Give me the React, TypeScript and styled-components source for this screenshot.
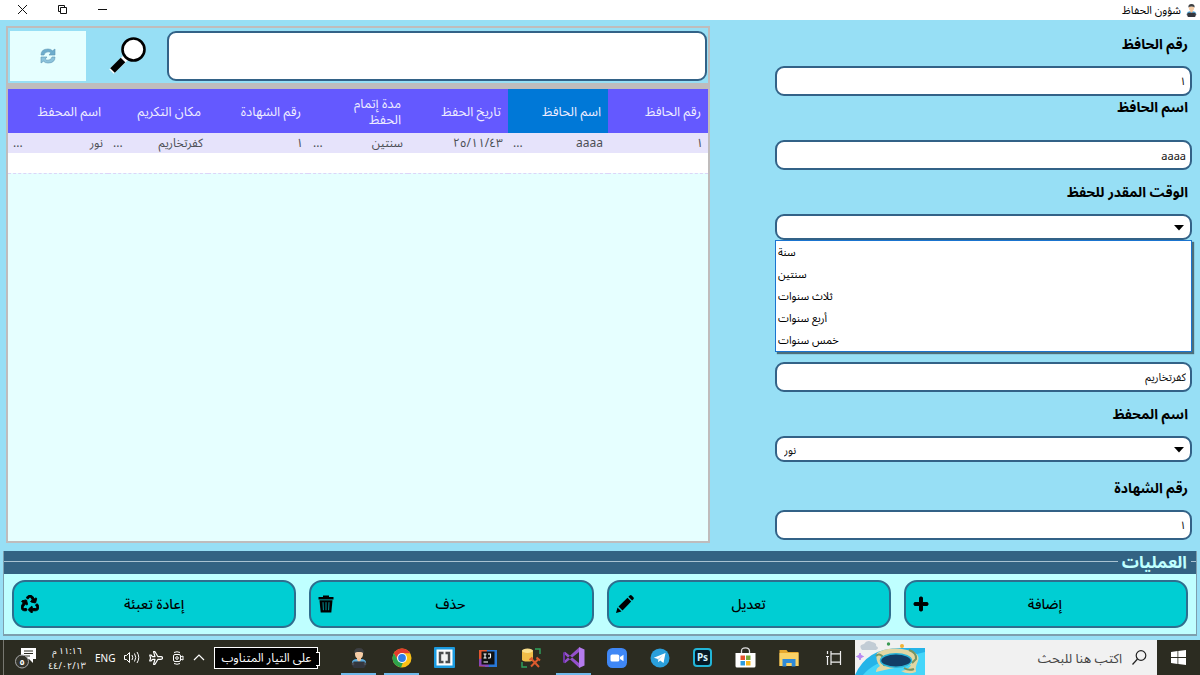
import React from "react";
import styled, { createGlobalStyle } from "styled-components";
import { FaRecycle, FaPlus } from "react-icons/fa";

const GlobalStyle = createGlobalStyle`
  * { box-sizing: border-box; }
  body { margin: 0; background: #97dff5; }
  body, button, input, select {
    font-family: "Noto Sans", "Noto Sans Arabic", "DejaVu Sans", sans-serif;
  }
`;

const Page = styled.div`
  min-height: 100vh;
  display: flex;
  flex-direction: column;
  background: #97dff5;
  color: #000;
`;

/* Title bar */
const TitleBar = styled.header`
  height: 20px;
  display: flex;
  align-items: center;
  gap: 4px;
  padding: 0 2px;
  background: #fff;
`;

const Title = styled.h1`
  margin: 0;
  flex: 1;
  font-size: 11px;
  line-height: 20px;
  font-weight: 400;
`;

const WindowControls = styled.div`
  display: flex;
`;

const WindowButton = styled.button`
  width: 40px;
  height: 20px;
  padding: 0 0 2px;
  border: 0;
  background: none;
  display: grid;
  place-items: center;
`;

/* Main area */
const Main = styled.main`
  flex: 1;
  display: grid;
  grid-template-columns: 417fr 704fr;
  column-gap: 65px;
  padding: 0 8px 8px 6px;
`;

const Form = styled.form`
  padding: 2px 0 3px;
`;

const Field = styled.div<{ $tall?: boolean }>`
  min-height: ${(p) => (p.$tall ? 148 : 74)}px;
`;

const Label = styled.label<{ $top?: boolean }>`
  display: block;
  height: 44px;
  padding: 0 4px;
  font-size: 14px;
  font-weight: 700;
  line-height: ${(p) => (p.$top ? 22 : 44)}px;
`;

const TextInput = styled.input`
  display: block;
  width: 100%;
  height: 30px;
  padding: 0 4px;
  border: 2px solid #336287;
  border-radius: 9px;
  background: #fff;
  color: #111;
  font-size: 11px;
`;

const SelectWrap = styled.div`
  position: relative;
`;

const Select = styled.select`
  display: block;
  appearance: none;
  width: 100%;
  height: 26px;
  padding: 0 7px;
  border: 2px solid #336287;
  border-radius: 9px;
  background: #fff;
  color: #111;
  font-size: 11px;
`;

const Arrow = styled.svg`
  position: absolute;
  right: 8px;
  top: 11px;
  pointer-events: none;
`;

const Menu = styled.ul`
  position: absolute;
  top: 100%;
  left: 0;
  right: 0;
  margin: 0;
  padding: 0;
  list-style: none;
  background: #fff;
  border: 1px solid #1a74cf;
  box-shadow: 2px 2px 1px #4c6f7c;
`;

const MenuItem = styled.li`
  padding: 0 2px;
  font-size: 11px;
  line-height: 22px;
  text-align: left;
`;

/* Records panel */
const Panel = styled.section`
  margin-top: 6px;
  display: flex;
  flex-direction: column;
  border: 2px solid #bfbcbc;
  background: #e6ffff;
`;

const Toolbar = styled.div`
  display: flex;
  align-items: center;
  gap: 20px;
  height: 61px;
  padding: 0 1px 0 2px;
  background: #97dff5;
  border-bottom: 6px solid #bfbcbc;
`;

const SearchInput = styled.input`
  flex: 1;
  min-width: 0;
  height: 50px;
  padding: 0 10px;
  border: 2px solid #336287;
  border-radius: 9px;
  background: #fff;
  font-size: 14px;
`;

const RefreshButton = styled.button`
  width: 76px;
  height: 50px;
  margin-right: 3px;
  border: 0;
  background: #e6ffff;
  display: grid;
  place-items: center;
`;

const Table = styled.table`
  width: 100%;
  table-layout: fixed;
  border-collapse: collapse;
`;

const HeadCell = styled.th<{ $active?: boolean }>`
  height: 44px;
  padding: 0 7px 0 16px;
  background: ${(p) => (p.$active ? "#0078d7" : "#6459ff")};
  color: #eeecff;
  font-size: 13px;
  line-height: 16px;
  font-weight: 400;
  text-align: right;
`;

const Cell = styled.td`
  height: 20px;
  padding: 0 5px;
  background: #e6e3fb;
  color: #4c4f55;
  font-size: 12px;
  line-height: 20px;
`;

const CellContent = styled.div`
  display: flex;
  justify-content: space-between;
`;

const EmptyCell = styled.td`
  height: 20px;
  padding: 0;
  background: #fff;
  border-bottom: 1px dashed #dcd5f8;
`;

/* Operations */
const Operations = styled.section`
  margin: 0 3px 4px;
  border: solid #7d9fae;
  border-width: 0 1px 2px;
  background: #bfffff;
`;

const OperationsHead = styled.div`
  height: 23px;
  display: flex;
  align-items: center;
  gap: 4px;
  padding-bottom: 2px;
  background: #336383;
`;

const Rule = styled.span<{ $short?: boolean }>`
  flex: ${(p) => (p.$short ? "0 0 5px" : "1")};
  height: 1px;
  background: #a9c3d2;
`;

const OperationsTitle = styled.h2`
  margin: 0;
  font-size: 17px;
  line-height: 20px;
  font-weight: 700;
  color: #bfffff;
`;

const ButtonRow = styled.div`
  display: grid;
  grid-template-columns: repeat(4, 1fr);
  gap: 13px;
  padding: 6px 8px;
`;

const ActionButton = styled.button`
  height: 48px;
  display: flex;
  align-items: center;
  padding: 0 7px;
  border: 2px solid #2f6e8e;
  border-radius: 13px;
  background: #00ced3;
  color: #000;
  font-size: 14px;
  font-weight: 500;
`;

const ActionLabel = styled.span`
  flex: 1;
  padding-right: 18px;
  text-align: center;
`;

/* Taskbar */
const Taskbar = styled.footer`
  height: 35px;
  display: flex;
  background: #2c2c21;
  color: #fff;
`;

const TaskButton = styled.button<{ $running?: boolean }>`
  flex: none;
  width: 43px;
  padding: 0;
  border: 0;
  background: linear-gradient(
    to left,
    transparent 4px,
    ${(p) => (p.$running ? "#6fb9ea" : "transparent")} 4px 39px,
    transparent 39px
  ) bottom / 100% 2px no-repeat;
  display: grid;
  place-items: center;
`;

const AppList = styled.div`
  flex: none;
  display: flex;
  margin-right: 2px;
`;

const SearchBox = styled.div`
  flex: none;
  display: flex;
  width: 302px;
  background: #f1f1f1;
`;

const SearchLabel = styled.label`
  flex: 1;
  display: flex;
  align-items: center;
  gap: 10px;
  padding: 0 10px;
`;

const TaskSearch = styled.input`
  flex: 1;
  min-width: 0;
  padding: 0;
  border: 0;
  outline: 0;
  background: none;
  font-size: 13px;
  &::placeholder { color: #444; opacity: 1; }
`;

const Tray = styled.div`
  margin-right: auto;
  display: flex;
  align-items: center;
  gap: 9px;
  padding-left: 3px;
`;

const Battery = styled.div`
  position: relative;
  height: 22px;
  padding: 0 6px;
  border: 1px solid #fff;
  background: #000;
  font-size: 12px;
  line-height: 20px;
  white-space: nowrap;
  &::after {
    content: "";
    position: absolute;
    right: -3px;
    top: 4px;
    width: 3px;
    height: 12px;
    border: 1px solid #fff;
    border-left: 0;
    background: #000;
  }
`;

const Language = styled.span`
  font-size: 10px;
`;

const Clock = styled.time`
  width: 38px;
  font-size: 9px;
  line-height: 15px;
  text-align: center;
  white-space: nowrap;
`;

const DesktopEdge = styled.span`
  width: 1px;
  height: 35px;
  background: #77776f;
`;

const Person = ({ size }: { size: number }) => (
  <svg width={size} height={size} viewBox="0 0 20 20">
    <path d="M3 17v-2.500q0-3 4-3.500h6q4 .500 4 3.500V17z" fill="#5baee0" />
    <path d="M8 9h4v3l-2 2-2-2z" fill="#f4c39a" />
    <path d="M6 4h8v2q0 4.500-4 4.500T6 6z" fill="#f6cda6" />
    <path d="M5.300 5.500Q4.500 0 10 0t4.700 5.500Q13.500 3.800 10 3.800T5.300 5.500z" fill="#3d3f42" />
    <path d="M4.500 13.500h11l1 5-1.500 1.500H5l-1.500-1.500z" fill="#33363d" />
    <circle cx="4" cy="16" r="1.400" fill="#4a4c54" />
    <circle cx="16" cy="16" r="1.400" fill="#4a4c54" />
  </svg>
);

const Pencil = () => (
  <svg width="18" height="18" viewBox="0 0 18 18">
    <path d="M0 18l1.500-5.500 4 4zM2.500 11.500L11.500 2.700l3.700 3.700L6.500 15.500zM12.400 1.800l1.300-1.300q1-.9 2 0l1.700 1.700q.9 1 0 2l-1.300 1.300z" />
  </svg>
);

const Trash = () => (
  <svg width="16" height="18" viewBox="0 0 16 18">
    <path d="M5 2V.500h6V2h4.500v2.500H.500V2z" />
    <path d="M1.500 5.300h13L13.300 17.500H2.700z" />
    <path d="M5 7.200l.4 8M8 7.200v8M11 7.200l-.4 8" stroke="#00a4a8" strokeWidth=".9" />
  </svg>
);

const Magnifier = () => (
  <svg width="38" height="38" viewBox="0 0 38 38">
    <path d="M2.500 34.500L17 20.500" stroke="#fff" strokeWidth="6.500" />
    <path d="M3.500 33.500L14 23" stroke="#000" strokeWidth="6.500" />
    <circle cx="24.500" cy="12.500" r="11" fill="#fff" stroke="#000" strokeWidth="2.600" />
  </svg>
);

const Refresh = () => (
  <svg width="16" height="16" viewBox="0 0 16 16">
    <path d="M1 7q0-6 7-6 3 0 4.500 1.800L15 1v6H9l1.800-2Q9.500 3.600 8 3.800 4.500 4 4 7z" fill="#6dadcd" stroke="#5c93b3" strokeWidth=".6" />
    <path d="M15 9q0 6-7 6-3 0-4.500-1.800L1 15V9h6l-1.800 2q1.300 1.400 2.800 1.200 3.500-.2 4-3.200z" fill="#8cc3dc" stroke="#5c93b3" strokeWidth=".6" />
  </svg>
);

const Chrome = () => (
  <svg width="20" height="20" viewBox="0 0 20 20">
    <circle cx="10" cy="10" r="9.500" fill="#fbc116" />
    <path d="M1.800 5.200A9.500 9.500 0 0 1 18.200 5.300H10L6 12.300z" fill="#e33b2e" />
    <path d="M1.800 5.200L6 12.300Q8 15 11 14.500L9 19.500A9.500 9.500 0 0 1 1.800 5.200z" fill="#2da24c" />
    <circle cx="10" cy="10" r="5" fill="#fff" />
    <circle cx="10" cy="10" r="3.900" fill="#2f7de8" />
  </svg>
);

const Brackets = () => (
  <svg width="21" height="21" viewBox="0 0 21 21">
    <rect width="21" height="21" rx="1" fill="#1b9be0" />
    <rect x="2.500" y="2.500" width="16" height="16" fill="#fff" />
    <rect x="4" y="4" width="13" height="13" fill="#f4f4f4" />
    <path d="M9.500 6H6v9h3.500M11.500 6H15v9h-3.500" fill="none" stroke="#4b4d4f" strokeWidth="2.400" />
  </svg>
);

const Idea = () => (
  <svg width="18" height="18" viewBox="0 0 18 18">
    <path d="M0 1h10L6 17.500H0z" fill="#e5572f" />
    <path d="M8 1h10v17H6z" fill="#2878d8" />
    <path d="M0 10l8-1 2 9-10-1z" fill="#8a45b5" />
    <rect x="2.500" y="2.500" width="13" height="13" fill="#111" />
    <path d="M4.500 5h3M6 5v4M4.500 9h3M9 5h2.500v3q0 1-1.200 1H9M4.500 13H9" fill="none" stroke="#fff" strokeWidth="1.100" />
  </svg>
);

const DatabaseTools = () => (
  <svg width="20" height="20" viewBox="0 0 20 20">
    <path d="M1 2.500v9q0 2 5.500 2t5.500-2v-9z" fill="#f0bd48" />
    <ellipse cx="6.500" cy="2.700" rx="5.500" ry="2.200" fill="#fbe08c" />
    <path d="M14 1h5v5M1 14v5h5" fill="none" stroke="#2ea35e" strokeWidth="1.400" />
    <path d="M10 18.500l7-7M10.500 11l7.500 8" stroke="#dc5a2d" strokeWidth="2" />
    <path d="M8.500 12l3-2.500M15.500 9.500l3.500 3" stroke="#dc5a2d" strokeWidth="2" />
  </svg>
);

const VisualStudio = () => (
  <svg width="22" height="21" viewBox="0 0 22 21">
    <path d="M0 6l2-1.200L16 16v4.500zM0 15l2 1.200L16 5V.500z" fill="#9450cc" />
    <path d="M0 6l2-1.200v11.400L0 15z" fill="#6c33a3" />
    <path d="M16 0l5.500 2.500v16L16 21z" fill="#b57bed" />
  </svg>
);

const ZoomApp = () => (
  <svg width="20" height="20" viewBox="0 0 20 20">
    <rect width="20" height="20" rx="5.500" fill="#3f87f5" />
    <rect x="3.500" y="6.500" width="8.800" height="7" rx="1.600" fill="#fff" />
    <path d="M13 9l3.500-2.300v6.600L13 11z" fill="#fff" />
  </svg>
);

const Telegram = () => (
  <svg width="20" height="20" viewBox="0 0 20 20">
    <circle cx="10" cy="10" r="9.500" fill="#2a9fdc" />
    <path d="M3.800 9.800L15.500 5l-2 10-3.400-2.500-1.800 1.800-.5-3.300z" fill="#fff" />
    <path d="M7.800 11L13 7.300l-4.200 4.500-.5 2.500z" fill="#b9dcf0" />
  </svg>
);

const PsBadge = styled.span`
  width: 19px;
  height: 19px;
  border: 2px solid #22b5d8;
  border-radius: 4px;
  background: #061826;
  color: #d5f3ff;
  font-size: 10px;
  line-height: 15px;
  font-weight: 700;
  text-align: center;
`;

const Store = () => (
  <svg width="21" height="21" viewBox="0 0 21 21">
    <path d="M6.500 6V4q0-3.200 4-3.200t4 3.200v2" fill="none" stroke="#ddd" strokeWidth="1.300" />
    <path d="M.500 6h20v13q0 1.500-1.500 1.500H2Q.500 20.500.500 19z" fill="#fff" />
    <path d="M5.500 8.500H10V13H5.500z" fill="#e5532d" />
    <path d="M11 8.500h4.500V13H11z" fill="#7aa83a" />
    <path d="M5.500 14H10v4.500H5.500z" fill="#2b9ce0" />
    <path d="M11 14h4.500v4.500H11z" fill="#f6b820" />
  </svg>
);

const Explorer = () => (
  <svg width="20" height="18" viewBox="0 0 20 18">
    <path d="M.500 1h7l1.500 2h10.500v14H.500z" fill="#e8a92e" />
    <path d="M.500 4h19v13H.500z" fill="#fbd266" />
    <path d="M3.500 17.500V10h13v7.500h-3.800V14H7.300v3.500z" fill="#2f8ad8" />
  </svg>
);

const TaskView = () => (
  <svg width="16" height="14" viewBox="0 0 16 14" fill="none" stroke="#eee" strokeWidth="1.200">
    <path d="M5 0v2.800h9.500V0M5 14v-2.800h9.500V14M5 2.800v8.400M14.500 2.800v8.400M1.500 0v3M1.500 5v9M0 5.500h3" />
  </svg>
);

const Island = () => (
  <svg width="70" height="35" viewBox="0 0 70 35">
    <path d="M0 35Q12 8 45 8h25v27z" fill="#25b4e8" />
    <path d="M8 35q12-14 30-15l32-8v23z" fill="#45d6fa" />
    <path d="M22 13q12-7 30-3 14 3 11 11-3 6-2 11-8 3-15-1 8-1 10-6l-22 4-13 3q0-4 4-6-5-5-3-13z" fill="#e2d7a4" />
    <path d="M21 16q3-3 6 0t2 10M54 10q8 3 7 9l-4 4M49 28q5 3 10 1" fill="none" stroke="#779462" strokeWidth="2" />
    <ellipse cx="41" cy="20.500" rx="15.500" ry="6.800" fill="#123d66" stroke="#2bb4d8" strokeWidth="1.500" />
    <path d="M7 10q-4-5 2-6 3-5 8-2 5 1 4 4 4 2 0 4z" fill="#c2ccd5" />
    <path d="M5 13l1 2.500 2.500 1L6 17.500 5 20l-1-2.500-2.500-1L4 15.500z" fill="#b988f2" stroke="#b988f2" />
    <circle cx="33.500" cy="4" r="1.700" fill="#3b9b54" />
    <circle cx="47" cy="6" r="2" fill="#f2b233" />
  </svg>
);

const Windows = () => (
  <svg width="15" height="15" viewBox="0 0 15 15" fill="#fff">
    <path d="M0 2l6.500-1v6H0zM7.300.900L15 0v7H7.300zM0 8h6.500v6L0 13zM7.300 8H15v7l-7.700-1z" />
  </svg>
);

const columns = [
  "رقم الحافظ",
  "اسم الحافظ",
  "تاريخ الحفظ",
  "مدة إتمام الحفظ",
  "رقم الشهادة",
  "مكان التكريم",
  "اسم المحفظ",
];

const record = [
  { text: "١" },
  { text: "aaaa", more: true },
  { text: "٢٥/١١/٤٣" },
  { text: "سنتين", more: true },
  { text: "١" },
  { text: "كفرتخاريم", more: true },
  { text: "نور", more: true },
];

const durations = ["سنة", "سنتين", "ثلاث سنوات", "أربع سنوات", "خمس سنوات"];

const actions = [
  { label: "إضافة", icon: <FaPlus size={16} stroke="#000" strokeWidth={30} /> },
  { label: "تعديل", icon: <Pencil /> },
  { label: "حذف", icon: <Trash /> },
  { label: "إعادة تعبئة", icon: <FaRecycle size={18} stroke="#000" strokeWidth={28} /> },
];

const apps = [
  { name: "Explorer", icon: <Explorer /> },
  { name: "Store", icon: <Store /> },
  { name: "Photoshop", icon: <PsBadge>Ps</PsBadge> },
  { name: "Telegram", icon: <Telegram /> },
  { name: "Zoom", icon: <ZoomApp /> },
  { name: "Visual Studio", icon: <VisualStudio />, running: true },
  { name: "Database tools", icon: <DatabaseTools /> },
  { name: "IntelliJ IDEA", icon: <Idea /> },
  { name: "Brackets", icon: <Brackets /> },
  { name: "Chrome", icon: <Chrome />, running: true },
  { name: "شؤون الحفاظ", icon: <Person size={20} />, running: true },
];

const DownArrow = () => (
  <Arrow width="10" height="6" viewBox="0 0 10 6">
    <path d="M0 0h10L5 5.500z" />
  </Arrow>
);

export default function App() {
  return (
    <Page dir="rtl" lang="ar">
      <GlobalStyle />
      <TitleBar>
        <Person size={13} />
        <Title>شؤون الحفاظ</Title>
        <WindowControls>
          <WindowButton aria-label="تصغير">
            <svg width="9" height="9" viewBox="0 0 9 9"><path d="M0 4.500h9" stroke="#111" /></svg>
          </WindowButton>
          <WindowButton aria-label="استعادة">
            <svg width="9" height="9" viewBox="0 0 9 9" fill="none" stroke="#111"><path d="M2.500 2.500h6v6h-6zM.500 6.500v-6h6v2M.500 6.500h2" /></svg>
          </WindowButton>
          <WindowButton aria-label="إغلاق">
            <svg width="9" height="9" viewBox="0 0 9 9"><path d="M0 0l9 9M9 0L0 9" stroke="#111" /></svg>
          </WindowButton>
        </WindowControls>
      </TitleBar>

      <Main>
        <Form>
          <Field>
            <Label htmlFor="id">رقم الحافظ</Label>
            <TextInput id="id" defaultValue="١" />
          </Field>
          <Field>
            <Label htmlFor="name" $top>اسم الحافظ</Label>
            <TextInput id="name" defaultValue="aaaa" />
          </Field>
          <Field $tall>
            <Label htmlFor="duration">الوقت المقدر للحفظ</Label>
            <SelectWrap>
              <Select id="duration" dir="ltr" defaultValue="">
                <option value="" />
              </Select>
              <DownArrow />
              <Menu role="listbox">
                {durations.map((d) => (
                  <MenuItem key={d} role="option">{d}</MenuItem>
                ))}
              </Menu>
            </SelectWrap>
          </Field>
          <Field>
            <Label htmlFor="place" />
            <TextInput id="place" aria-label="مكان التكريم" defaultValue="كفرتخاريم" />
          </Field>
          <Field>
            <Label htmlFor="teacher">اسم المحفظ</Label>
            <SelectWrap>
              <Select id="teacher" dir="ltr" defaultValue="نور">
                <option>نور</option>
              </Select>
              <DownArrow />
            </SelectWrap>
          </Field>
          <Field>
            <Label htmlFor="certificate">رقم الشهادة</Label>
            <TextInput id="certificate" defaultValue="١" />
          </Field>
        </Form>

        <Panel>
          <Toolbar>
            <SearchInput type="search" aria-label="بحث" />
            <Magnifier />
            <RefreshButton aria-label="تحديث"><Refresh /></RefreshButton>
          </Toolbar>
          <Table>
            <thead>
              <tr>
                {columns.map((c, i) => (
                  <HeadCell key={c} $active={i === 1}>{c}</HeadCell>
                ))}
              </tr>
            </thead>
            <tbody>
              <tr>
                {record.map((r, i) => (
                  <Cell key={i}>
                    <CellContent>
                      <span>{r.text}</span>
                      {r.more && <span>...</span>}
                    </CellContent>
                  </Cell>
                ))}
              </tr>
              <tr>
                <EmptyCell colSpan={7} />
              </tr>
            </tbody>
          </Table>
        </Panel>
      </Main>

      <Operations>
        <OperationsHead>
          <Rule $short />
          <OperationsTitle>العمليات</OperationsTitle>
          <Rule />
        </OperationsHead>
        <ButtonRow>
          {actions.map((a) => (
            <ActionButton key={a.label}>
              <ActionLabel>{a.label}</ActionLabel>
              {a.icon}
            </ActionButton>
          ))}
        </ButtonRow>
      </Operations>

      <Taskbar>
        <TaskButton aria-label="ابدأ"><Windows /></TaskButton>
        <SearchBox>
          <SearchLabel>
            <svg width="15" height="15" viewBox="0 0 15 15" fill="none" stroke="#222" strokeWidth="1.200">
              <circle cx="9" cy="5.500" r="4.800" />
              <path d="M5.500 9L.500 14.500" />
            </svg>
            <TaskSearch aria-label="بحث" placeholder="اكتب هنا للبحث" />
          </SearchLabel>
          <Island />
        </SearchBox>
        <TaskButton aria-label="عرض المهام"><TaskView /></TaskButton>
        <AppList>
          {apps.map((a) => (
            <TaskButton key={a.name} aria-label={a.name} $running={a.running}>{a.icon}</TaskButton>
          ))}
        </AppList>
        <Tray>
          <Battery>على التيار المتناوب</Battery>
          <svg width="12" height="7" viewBox="0 0 12 7" fill="none" stroke="#fff" strokeWidth="1.200"><path d="M1 6l5-5 5 5" /></svg>
          <svg width="12" height="14" viewBox="0 0 12 14" fill="none" stroke="#fff"><rect x="1.500" y="3.500" width="7" height="7" rx="1.500" /><circle cx="5" cy="7" r="1.300" /><path d="M8.500 6l2.500-1v4L8.500 8M2 1.500Q5 0 8 1.500M2 12.500q3 1.500 6 0" /></svg>
          <svg width="14" height="14" viewBox="0 0 14 14" fill="none" stroke="#fff" strokeWidth="1.200" strokeLinejoin="round"><path d="M13.500 7q0-1.300-1.500-1.300H9L6 .700H4.500L6 5.700H3.500L2 4H.700L1.600 7 .700 10H2l1.500-1.700H6l-1.500 5H6l3-5h3q1.500 0 1.500-1.300z" /></svg>
          <svg width="16" height="13" viewBox="0 0 16 13" fill="none" stroke="#fff"><path d="M.500 4.500h2l3-3v10l-3-3h-2zM8 4q1.500 2.500 0 5M10.500 2.500q2.500 4 0 8M13 1q3.500 5.500 0 11" /></svg>
          <Language>ENG</Language>
          <Clock>١١:١٦ م<br />٤٤/٠٢/١٣</Clock>
          <svg width="26" height="24" viewBox="-1 0 26 24">
            <path d="M7 2h15v11h-3v4l-4-4H7z" fill="#fff" />
            <path d="M10 5h9M10 7.500h9M10 10h6" stroke="#2c2c21" />
            <circle cx="8" cy="15.500" r="6.500" fill="#35352c" stroke="#aaa" />
            <text x="8" y="19" fontSize="9" fontWeight="700" fill="#fff" textAnchor="middle">٥</text>
          </svg>
          <DesktopEdge />
        </Tray>
      </Taskbar>
    </Page>
  );
}
